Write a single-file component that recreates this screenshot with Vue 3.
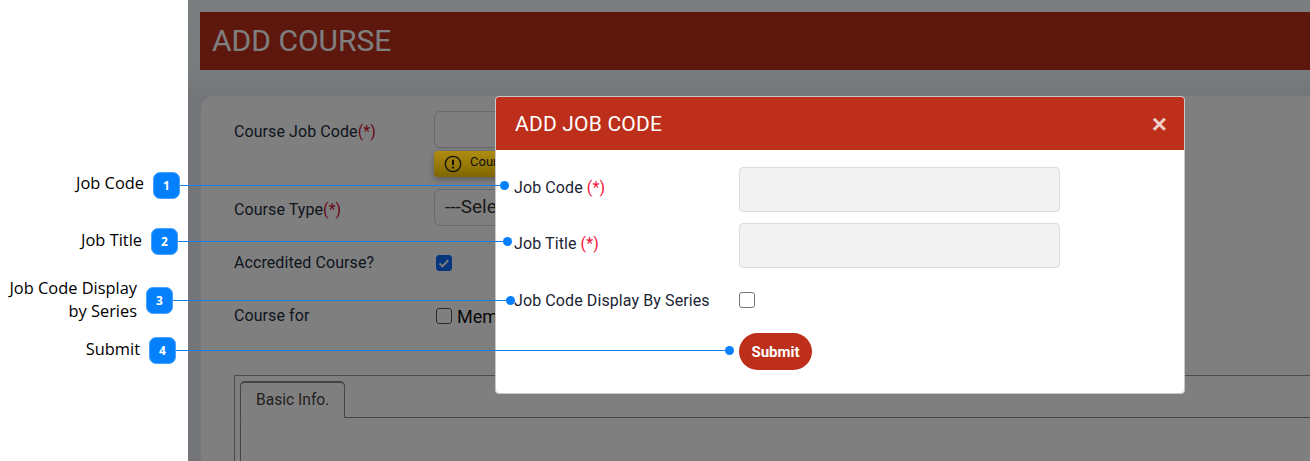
<script setup>
const callouts = [
  { n: 1, cls: 'c1', label: ['Job Code'] },
  { n: 2, cls: 'c2', label: ['Job Title'] },
  { n: 3, cls: 'c3', label: ['Job Code Display', 'by Series'] },
  { n: 4, cls: 'c4', label: ['Submit'] }
]
</script>

<template>
  <div class="shot">
    <aside class="gutter"></aside>
    <main class="page">
      <h1 class="banner">ADD COURSE</h1>
      <section class="card">
        <div class="row r1">
          <label>Course Job Code<span class="req">(*)</span></label>
          <div class="field">
            <div class="input"></div>
            <div class="warn">
              <svg width="18" height="18" viewBox="0 0 18 18"><circle cx="9" cy="9" r="7.7" fill="none" stroke="#111" stroke-width="1.3"/><path d="M9 4.8v5.2" stroke="#111" stroke-width="2" fill="none"/><circle cx="9" cy="12.6" r="1.1" fill="#111"/></svg>
              <span class="warntext">Course Job Code is required</span>
            </div>
          </div>
        </div>
        <div class="row r2">
          <label>Course Type<span class="req">(*)</span></label>
          <div class="input select">---Select---</div>
        </div>
        <div class="row r3">
          <label>Accredited Course?</label>
          <span class="bg-check on">
            <svg width="16" height="16" viewBox="0 0 16 16"><path d="M3.6 8.4l3 3 5.6-6.2" fill="none" stroke="#fff" stroke-width="2"/></svg>
          </span>
        </div>
        <div class="row r4">
          <label>Course for</label>
          <span class="bg-check"></span><span class="member">Member</span>
        </div>
        <div class="fieldset">
          <div class="tabs"><div class="tab">Basic Info.</div></div>
          <div class="tabbody"></div>
        </div>
      </section>
      <div class="dim"></div>
    </main>

    <div class="modal">
      <header class="mhead">
        <h2>ADD JOB CODE</h2>
        <span class="close">×</span>
      </header>
      <div class="mbody">
        <div class="mrow m1">
          <label>Job Code <span class="mreq">(*)</span></label>
          <div class="minput"></div>
        </div>
        <div class="mrow m2">
          <label>Job Title <span class="mreq">(*)</span></label>
          <div class="minput"></div>
        </div>
        <div class="mrow m3">
          <label>Job Code Display By Series</label>
          <span class="mcheck"></span>
        </div>
        <div class="mrow m4">
          <label></label>
          <button class="submit">Submit</button>
        </div>
      </div>
    </div>

    <div v-for="c in callouts" :key="c.n" class="callout" :class="c.cls">
      <div class="clabel"><div v-for="l in c.label" :key="l">{{ l }}</div></div>
      <div class="badge">{{ c.n }}</div>
      <div class="line"></div>
      <div class="dot"></div>
    </div>
  </div>
</template>

<style scoped>
.shot {
  position: relative;
  display: flex;
  width: 1310px;
  height: 461px;
  overflow: hidden;
  background: #fff;
  font-family: Roboto, "Liberation Sans", sans-serif;
}
.gutter { width: 188px; flex: none; background: #fff; }
.page {
  position: relative;
  flex: 1;
  min-width: 0;
  padding: 12px 0 0 12px;
  background: linear-gradient(#f4fcff 0, #f2f9fd 70px, #e8ebf0 96px);
}
.banner {
  margin: 0 0 26px;
  height: 58px;
  padding-left: 12px;
  background: #bd2f1a;
  color: #fff;
  font-size: 30px;
  font-weight: 400;
  line-height: 58px;
  white-space: nowrap;
}
.card {
  position: relative;
  height: 400px;
  margin-left: 1px;
  padding: 15px 0 0 33px;
  background: #fff;
  border-radius: 12px 0 0 0;
  color: #1e2a3a;
  font-size: 16px;
}
.row { display: flex; align-items: flex-start; }
.row label { width: 200px; flex: none; color: #212c3c; font-size: 16px; line-height: 20px; letter-spacing: .08px; }
.req { color: #d01030; }
.r1 label { padding-top: 11px; }
.r1 { height: 78px; }
.r2 { height: 53px; }
.r2 label { padding-top: 11px; }
.r3 { height: 53px; padding-top: 11px; box-sizing: border-box; }
.r4 { height: 80px; padding-top: 11px; box-sizing: border-box; }
.field { flex: none; }
.input {
  box-sizing: border-box;
  width: 300px;
  height: 37px;
  border: 1px solid #ced4da;
  border-radius: 6px;
  background: #fff;
}
.select { padding: 5px 10px; font-size: 19px; color: #333; line-height: 24px; }
.warn {
  position: relative;
  z-index: 1;
  display: flex;
  align-items: center;
  gap: 8px;
  box-sizing: border-box;
  width: 300px;
  height: 26px;
  margin-top: 3px;
  padding-left: 10px;
  border-radius: 4px;
  background: linear-gradient(#b08c12, #9a7c0a 45%, #7f6600);
  box-shadow: 0 2px 6px rgba(0, 0, 0, .3);
  font-size: 13px;
  color: #111;
}
.warntext { margin-top: -5px; }
.bg-check {
  display: block;
  box-sizing: border-box;
  width: 16px;
  height: 16px;
  margin-left: 2px;
  border: 1px solid #555;
  border-radius: 3px;
  background: #fff;
}
.bg-check.on { background: #0d6efd; border-color: #0d6efd; }
.bg-check.on svg { display: block; margin: -1px; }
.r3 .bg-check { margin-top: 2px; }
.r4 .bg-check { margin-top: 2px; }
.member { margin: -1px 0 0 5px; font-size: 18px; line-height: 24px; color: #111; }
.fieldset {
  box-sizing: border-box;
  width: 1200px;
  height: 200px;
  padding: 5px;
  border: 1px solid #999;
}
.tabs { height: 36px; border-bottom: 1px solid #888; box-sizing: content-box; display: flex; }
.tab {
  box-sizing: border-box;
  width: 105px;
  height: 37px;
  padding: 8px 0 0 15px;
  border: 1px solid #888;
  border-bottom: 1px solid #fff;
  border-radius: 5px 5px 0 0;
  border-top-width: 2px;
  background: #fff;
  font-size: 15.6px;
  color: #444;
}
.tabbody { height: 100px; border-left: 1px solid #888; }
.dim { position: absolute; inset: 0; background: rgba(0, 0, 0, .5); }

.modal {
  position: absolute;
  z-index: 2;
  left: 495px;
  top: 96px;
  box-sizing: border-box;
  width: 690px;
  height: 298px;
  background: #fff;
  border: 1px solid #c8c8c8;
  border-radius: 4px;
  overflow: hidden;
  color: #1b2433;
}
.mhead {
  display: flex;
  align-items: center;
  justify-content: space-between;
  height: 53px;
  padding: 0 17px 0 19px;
  background: #bd2f1a;
  color: #fff;
}
.mhead h2 { margin: 0; font-size: 21px; font-weight: 400; letter-spacing: .2px; }
.close { font-size: 26px; font-weight: 700; line-height: 26px; color: #f0cdc8; font-family: "Liberation Sans", sans-serif; }
.mbody { padding: 17px 0 0 18px; }
.mrow { display: flex; align-items: center; }
.mrow label { width: 225px; flex: none; font-size: 16px; letter-spacing: .1px; white-space: nowrap; }
.mreq { color: #f0143c; }
.m1, .m2 { height: 45px; margin-bottom: 11px; }
.m1 label, .m2 label { padding-bottom: 5px; }
.m3 { height: 28px; margin-top: 18px; }
.m4 { margin-top: 19px; }
.minput {
  box-sizing: border-box;
  width: 321px;
  height: 45px;
  background: #f2f2f2;
  border: 1px solid #dcdcdc;
  border-radius: 4px;
}
.mcheck {
  box-sizing: border-box;
  width: 16px;
  height: 16px;
  border: 1px solid #767676;
  border-radius: 3px;
  background: #fff;
}
.submit {
  width: 73px;
  height: 37px;
  padding: 0;
  border: 0;
  border-radius: 19px;
  background: #bd2f1a;
  color: #fff;
  font-family: Roboto, sans-serif;
  font-size: 15px;
  font-weight: 700;
}

.callout { position: absolute; z-index: 3; left: 0; height: 27px; width: 0; }
.clabel {
  position: absolute;
  font-family: "Open Sans", "Noto Sans", sans-serif;
  font-size: 16.4px;
  line-height: 23px;
  color: #000;
  text-align: right;
  white-space: nowrap;
  transform: translateX(-100%);
}
.badge {
  position: absolute;
  top: 0;
  width: 27px;
  height: 27px;
  box-sizing: border-box;
  background: #0480fc;
  border: 1px solid #4aa2fb;
  border-radius: 7px;
  color: #fff;
  font-family: "Open Sans", sans-serif;
  font-size: 12px;
  font-weight: 700;
  line-height: 25px;
  text-align: center;
}
.line { position: absolute; top: 13px; height: 1px; background: #1580ea; }
.dot { position: absolute; top: 9px; width: 9px; height: 9px; border-radius: 50%; background: #0480fc; }

.c1 { top: 172px; }
.c1 .clabel { left: 144px; top: -1px; }
.c1 .badge { left: 153px; }
.c1 .line { left: 180px; width: 322px; }
.c1 .dot { left: 500px; }

.c2 { top: 228px; }
.c2 .clabel { left: 142px; top: 0; }
.c2 .badge { left: 151px; }
.c2 .line { left: 178px; width: 326px; }
.c2 .dot { left: 503px; }

.c3 { top: 287px; }
.c3 .clabel { left: 137px; top: -11px; }
.c3 .badge { left: 146px; }
.c3 .line { left: 173px; width: 335px; }
.c3 .dot { left: 506px; }

.c4 { top: 337px; }
.c4 .clabel { left: 140px; top: 0; }
.c4 .badge { left: 149px; }
.c4 .line { left: 176px; width: 552px; }
.c4 .dot { left: 725px; }
</style>
